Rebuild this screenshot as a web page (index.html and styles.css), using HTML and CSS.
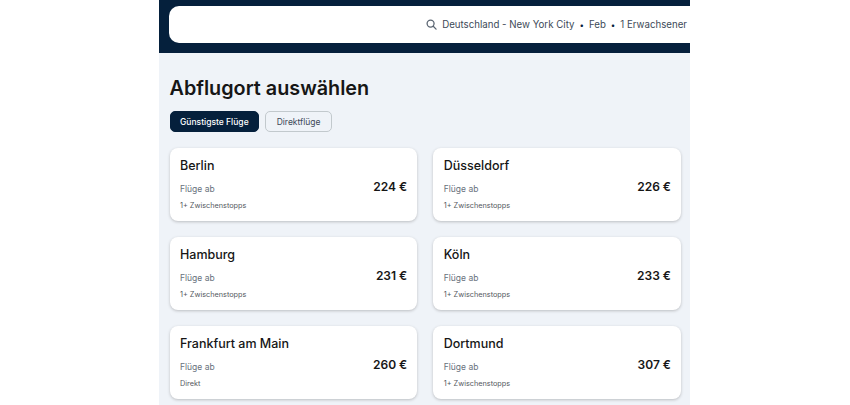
FILE: index.html
```html
<!DOCTYPE html>
<html lang="de">
<head>
    <meta charset="UTF-8">
    <title>Abflugort auswählen</title>
    <link rel="stylesheet" href="styles.css">
</head>
<body>
    <div class="page">
        <header class="top-bar">
            <div class="search-box">
                <svg class="search-icon" width="11" height="11" viewBox="0 0 12 12" fill="none" stroke="#5a6572" stroke-width="1.4">
                    <circle cx="5" cy="5" r="3.8"/>
                    <path d="M7.9 7.9 11 11" stroke-linecap="round"/>
                </svg>
                <span>Deutschland - New York City</span>
                <span class="dot">•</span>
                <span>Feb</span>
                <span class="dot">•</span>
                <span>1 Erwachsener</span>
            </div>
        </header>
        <main class="content">
            <h1>Abflugort auswählen</h1>
            <div class="filters">
                <button class="filter active">Günstigste Flüge</button>
                <button class="filter">Direktflüge</button>
            </div>
            <div class="cards">
                <div class="card">
                    <div class="city">Berlin</div>
                    <div class="price-row"><span class="from">Flüge ab</span><span class="price">224 €</span></div>
                    <div class="stops">1+ Zwischenstopps</div>
                </div>
                <div class="card">
                    <div class="city">Düsseldorf</div>
                    <div class="price-row"><span class="from">Flüge ab</span><span class="price">226 €</span></div>
                    <div class="stops">1+ Zwischenstopps</div>
                </div>
                <div class="card">
                    <div class="city">Hamburg</div>
                    <div class="price-row"><span class="from">Flüge ab</span><span class="price">231 €</span></div>
                    <div class="stops">1+ Zwischenstopps</div>
                </div>
                <div class="card">
                    <div class="city">Köln</div>
                    <div class="price-row"><span class="from">Flüge ab</span><span class="price">233 €</span></div>
                    <div class="stops">1+ Zwischenstopps</div>
                </div>
                <div class="card">
                    <div class="city">Frankfurt am Main</div>
                    <div class="price-row"><span class="from">Flüge ab</span><span class="price">260 €</span></div>
                    <div class="stops">Direkt</div>
                </div>
                <div class="card">
                    <div class="city">Dortmund</div>
                    <div class="price-row"><span class="from">Flüge ab</span><span class="price">307 €</span></div>
                    <div class="stops">1+ Zwischenstopps</div>
                </div>
            </div>
        </main>
    </div>
</body>
</html>
```

FILE: styles.css
```css
html, body {
    margin: 0;
    height: 405px;
    overflow: hidden;
    background-color: white;
}
body {
    font-family: Inter, "Noto Sans", sans-serif;
    color: #05203c;
}
.page {
    width: 531px;
    height: 405px;
    margin-left: 159px;
    background-color: #eff3f8;
    overflow: hidden;
}
.top-bar {
    background-color: #05203c;
    height: 53px;
    padding: 6px 0 0 10px;
    box-sizing: border-box;
}
.search-box {
    display: flex;
    align-items: center;
    justify-content: flex-end;
    gap: 5px;
    height: 37px;
    padding-right: 3px;
    background-color: white;
    border-radius: 10px 0 0 10px;
    font-size: 9.7px;
    color: #3d4a58;
    white-space: nowrap;
}
.dot {
    font-size: 8px;
    color: #05203c;
}
.content {
    padding: 0 9px 0 10.5px;
}
h1 {
    margin: 22px 0 0 0;
    font-size: 19.8px;
    line-height: 26px;
    font-weight: 600;
    color: #161616;
}
.filters {
    display: flex;
    gap: 6px;
    margin-top: 10px;
}
.filter {
    height: 21px;
    padding: 0 10.5px;
    font-family: inherit;
    font-size: 8.5px;
    background-color: transparent;
    border: 1px solid #c2c9cd;
    border-radius: 5px;
    color: #3d4a58;
}
.filter.active {
    padding: 0 9.5px;
    background-color: #05203c;
    border-color: #05203c;
    color: white;
    font-weight: 500;
}
.cards {
    display: grid;
    grid-template-columns: 1fr 1fr;
    gap: 16px;
    margin-top: 16px;
}
.card {
    height: 73px;
    padding: 9px 10px 0 10.5px;
    box-sizing: border-box;
    background-color: white;
    border-radius: 8px;
    box-shadow: 0 1px 3px rgba(37, 32, 31, 0.25);
}
.city {
    font-size: 12.5px;
    line-height: 18px;
    font-weight: 500;
    color: #161616;
}
.price-row {
    display: flex;
    justify-content: space-between;
    align-items: center;
    height: 18px;
    margin-top: 5px;
}
.from {
    font-size: 8.5px;
    color: #68717c;
}
.price {
    margin-bottom: 5px;
    font-size: 12px;
    font-weight: 600;
    color: #161616;
}
.stops {
    margin-top: 2px;
    font-size: 7.3px;
    line-height: 12px;
    color: #545860;
}
```
